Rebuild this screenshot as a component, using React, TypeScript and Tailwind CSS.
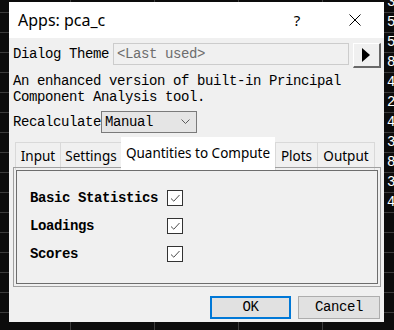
import React from "react";

const mono = "font-['Liberation_Mono',monospace] text-[14px] tracking-[-0.4px]";
const sans = "font-['Noto_Sans',sans-serif]";

function Check() {
  return (
    <div className="w-[16px] h-[16px] border border-[#333333] bg-white flex items-center justify-center">
      <svg width="12" height="12" viewBox="0 0 12 12">
        <polyline points="2,6.5 4.8,9.2 10.5,3" fill="none" stroke="#4a4a4a" strokeWidth="1" />
      </svg>
    </div>
  );
}

export default function App() {
  const digits = ["3", "5", "5", "8", "4", "2", "4", "3", "8", "3", "4"];
  const tabs = [
    { t: "Input", w: "w-[46px]" },
    { t: "Settings", w: "w-[62px]" },
    { t: "Quantities to Compute", w: "w-[154px]", sel: true },
    { t: "Plots", w: "w-[43px]" },
    { t: "Output", w: "w-[58px]" },
  ];
  const rows = ["Basic Statistics", "Loadings", "Scores"];
  return (
    <div className="w-[394px] h-[330px] overflow-hidden flex pt-[2px] pl-[9px] bg-[#0c0c0c] bg-[linear-gradient(to_bottom,#3c3c3c_1px,transparent_1px),linear-gradient(to_right,#3c3c3c_1px,transparent_1px)] bg-[size:100%_20px,84px_100%] bg-[position:0_12px,70px_0]">
      <div className="w-[375px] h-[320px] shrink-0 flex flex-col bg-[#f0f0f0]">
        {/* title bar */}
        <div className="h-[36px] bg-white flex items-center shrink-0">
          <div className={`${sans} flex-1 pl-[9px] text-[16px] text-black`}>Apps: pca_c</div>
          <div className={`${sans} w-[58px] text-center text-[15px] text-black`}>?</div>
          <div className="w-[58px] flex items-center justify-center">
            <svg width="12" height="12" viewBox="0 0 12 12">
              <path d="M0.5 0.5 L11.5 11.5 M11.5 0.5 L0.5 11.5" stroke="#000" strokeWidth="1" />
            </svg>
          </div>
        </div>
        {/* body */}
        <div className="flex-1 flex flex-col">
          <div className="flex items-start mt-[5px] pl-[4px]">
            <div className={`${mono} w-[100px] h-[22px] flex items-center text-black whitespace-nowrap`}>Dialog Theme</div>
            <div className={`${mono} w-[236px] h-[22px] border border-[#cccccc] bg-[#f0f0f0] flex items-center pl-[3px] text-[#6d6d6d] whitespace-nowrap`}>
              &lt;Last used&gt;
            </div>
            <div className="ml-[4px] w-[28px] h-[25px] border-t border-l border-t-white border-l-white border-b-2 border-r-2 border-b-[#696969] border-r-[#696969] bg-[#f0f0f0] flex items-center justify-center">
              <svg width="9" height="14" viewBox="0 0 9 14">
                <polygon points="0,0 8,7 0,14" fill="#000" />
              </svg>
            </div>
          </div>
          <div className={`${mono} mt-[5px] pl-[4px] leading-[16px] text-black whitespace-nowrap`}>
            <div>An enhanced version of built-in Principal</div>
            <div>Component Analysis tool.</div>
          </div>
          <div className="flex items-center mt-[6px] pl-[4px]">
            <div className={`${mono} w-[88px] overflow-hidden whitespace-nowrap text-black`}>Recalculate</div>
            <div className="w-[96px] h-[22px] border border-[#7a7a7a] bg-[#e5e5e5] flex items-center justify-between pl-[3px] pr-[6px]">
              <span className={`${mono} text-black`}>Manual</span>
              <svg width="9" height="6" viewBox="0 0 9 6">
                <polyline points="0.5,0.5 4.5,4.5 8.5,0.5" fill="none" stroke="#5a5a5a" strokeWidth="1" />
              </svg>
            </div>
          </div>
          {/* tabs */}
          <div className="mt-[4px] pl-[6px] flex items-end h-[33px]">
            {tabs.map((tb) =>
              tb.sel ? (
                <div key={tb.t} className={`${sans} ${tb.w} relative z-10 h-[33px] bg-white flex items-center justify-center text-[13.5px] text-black pb-[1px]`}>
                  {tb.t}
                </div>
              ) : (
                <div key={tb.t} className={`${sans} ${tb.w} h-[28px] border-t border-l border-r border-[#d9d9d9] -mr-px flex items-center justify-center text-[13.5px] text-black`}>
                  {tb.t}
                </div>
              )
            )}
          </div>
          <div className="ml-[4px] -mt-[3px] w-[368px] h-[120px] border border-[#a0a0a0] p-[2px]">
            <div className="w-full h-full border border-[#6d6d6d] pt-[13px] pl-[13px]">
              {rows.map((r) => (
                <div key={r} className="flex items-center h-[28px]">
                  <div className={`${mono} w-[137px] font-bold text-black whitespace-nowrap`}>{r}</div>
                  <Check />
                </div>
              ))}
            </div>
          </div>
          <div className="mt-[9px] flex justify-end pr-[4px] gap-[7px]">
            <div className={`${mono} w-[81px] h-[23px] border-2 border-[#0078d7] bg-[#e1e1e1] flex items-center justify-center text-black`}>OK</div>
            <div className={`${mono} w-[82px] h-[23px] border border-[#adadad] bg-[#e1e1e1] flex items-center justify-center text-black`}>Cancel</div>
          </div>
        </div>
      </div>
      <div className="w-[10px] shrink-0 -mt-[10px] flex flex-col">
        {digits.map((d, i) => (
          <div key={i} className={`h-[20px] flex items-center pl-[3px] text-white text-[14px] font-['Liberation_Mono',monospace]`}>
            {d}
          </div>
        ))}
      </div>
    </div>
  );
}
